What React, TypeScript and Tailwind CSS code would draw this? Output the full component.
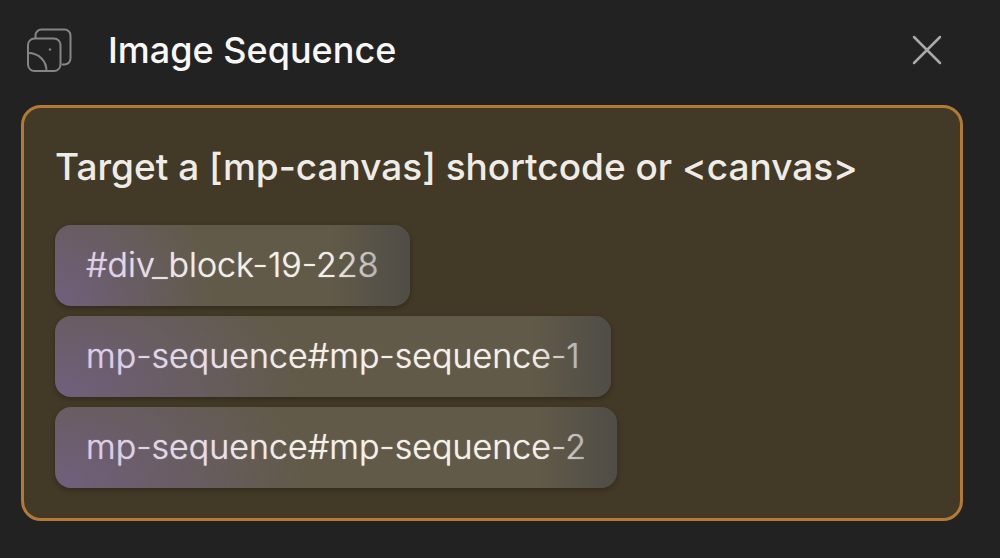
const targets = ["#div_block-19-228", "mp-sequence#mp-sequence-1", "mp-sequence#mp-sequence-2"];

function SequenceIcon() {
  return (
    <svg width="46" height="46" viewBox="0 0 46 46" fill="none" stroke="#858585" strokeWidth="2">
      <path d="M9.500 11V8.500a6 6 0 0 1 6-6h23a6 6 0 0 1 6 6v23a6 6 0 0 1-6 6h-3" />
      <rect x="2" y="11.500" width="32.500" height="32.500" rx="6.500" />
      <path d="M2 26c11 0 18.500 8 18.500 18" />
      <circle cx="24" cy="22.500" r="1.200" fill="#858585" stroke="none" />
    </svg>
  );
}

function CloseIcon() {
  return (
    <svg width="30" height="30" viewBox="0 0 30 30" fill="none" stroke="#a9a9a9" strokeWidth="2.500" strokeLinecap="round">
      <path d="M2 2l26 26M28 2L2 28" />
    </svg>
  );
}

function Chip({ label }: { label: string }) {
  return (
    <button
      type="button"
      className="relative h-[81px] overflow-hidden rounded-[16px] bg-[#615a48] px-[31px] pb-[2px] text-[34px] font-light text-[#f3efea] shadow-[0_2px_5px_rgba(0,0,0,0.25)] [text-shadow:0_0_1px_currentColor]"
    >
      {label}
      <span className="pointer-events-none absolute inset-0 bg-[radial-gradient(ellipse_45%_200%_at_0%_100%,rgba(140,105,220,0.36),rgba(140,105,220,0)),linear-gradient(to_right,rgba(68,68,70,0)_calc(100%-80px),rgba(68,68,70,0.6))]" />
    </button>
  );
}

export default function App() {
  return (
    <main className="min-h-screen bg-[#222222] pr-[37px] pl-[21px] font-['Inter',sans-serif] text-[#efece7]">
      <header className="flex h-[105px] items-start pt-[27px] pr-[21px] pl-[5px]">
        <SequenceIcon />
        <h1 className="ml-9 flex-1 text-[36px] leading-[46px] font-medium text-[#f7f7f7]">Image Sequence</h1>
        <button type="button" aria-label="Close" className="mt-2">
          <CloseIcon />
        </button>
      </header>
      <section className="rounded-[20px] border-[3px] border-[#b27a35] bg-[#423926] px-[31px] pt-[34px] pb-[30px]">
        <h2 className="text-[37px] leading-[50px] font-medium">Target a [mp-canvas] shortcode or &lt;canvas&gt;</h2>
        <div className="mt-[33px] flex flex-col items-start gap-[10px]">
          {targets.map((target) => (
            <Chip key={target} label={target} />
          ))}
        </div>
      </section>
    </main>
  );
}
